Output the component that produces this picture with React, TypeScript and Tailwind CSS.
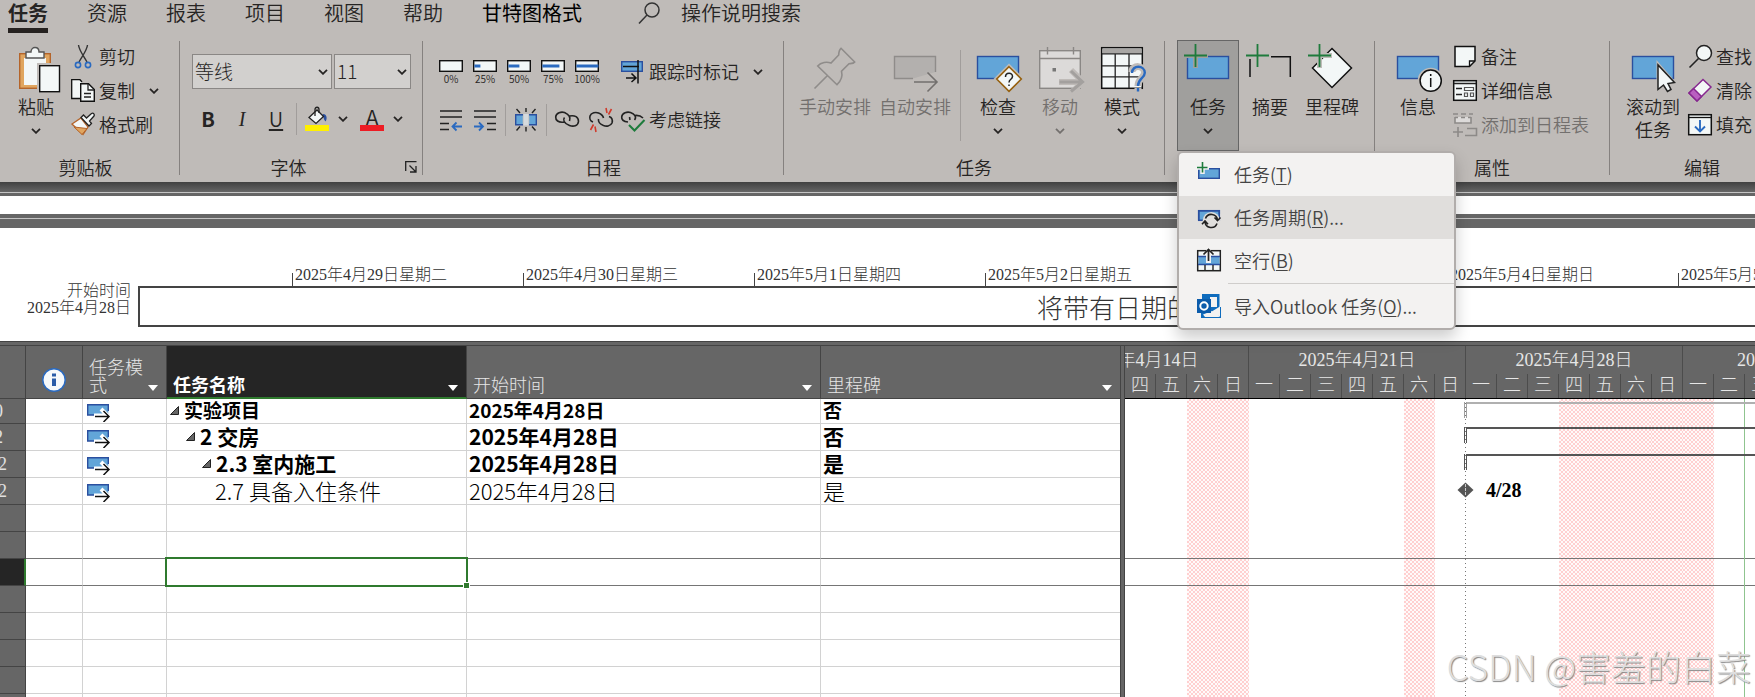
import React from "react";

const BLUE = "#62a5d8";
const EDGE = "#2a4f9f";
const RIBBON = "#bfbbb8";
const PAPER = "#f3f7f7";
const GREEN = "#1e7b3c";

type Kids = { children: React.ReactNode };

/* ---------- icon frames ---------- */

function Big({ children }: Kids) {
  return (
    <svg className="mt-1 mb-px h-[50px] w-12 shrink-0 overflow-visible" viewBox="0 0 48 50" fill="none" aria-hidden="true">
      {children}
    </svg>
  );
}

function Small({ children }: Kids) {
  return (
    <svg className="h-6 w-6 shrink-0 overflow-visible" viewBox="0 0 24 24" fill="none" aria-hidden="true">
      {children}
    </svg>
  );
}

function Chevron({ className = "" }: { className?: string }) {
  return (
    <svg className={`h-1.5 w-2.5 shrink-0 ${className}`} viewBox="0 0 10 6" fill="none" stroke="currentColor" strokeWidth="1.8" aria-hidden="true">
      <path d="M1 0.8 5 4.8 9 0.8" />
    </svg>
  );
}

/* ---------- large icons ---------- */

function Plus({ halo = RIBBON }: { halo?: string }) {
  return (
    <>
      <path d="M11.5 0V24M0 11.5H24" stroke={halo} strokeWidth="5" />
      <path d="M11.5 0V23M0 11.5H23" stroke={GREEN} strokeWidth="1.8" />
    </>
  );
}

const bar = <rect x="3.5" y="12.5" width="41" height="22" fill={BLUE} stroke={EDGE} strokeWidth="1.4" />;

const PasteIcon = () => (
  <Big>
    <rect x="7.7" y="9.7" width="30.6" height="34.6" fill="#e0a55f" stroke="#b4642a" strokeWidth="1.4" />
    <rect x="12" y="14" width="22" height="27" fill={PAPER} />
    <path d="M14 14V8h5c0-6 8-6 8 0h5v6z" fill={PAPER} stroke="#555" strokeWidth="1.4" />
    <rect x="25" y="19" width="23" height="29" fill={RIBBON} />
    <rect x="27.7" y="21.7" width="19.8" height="26" fill={PAPER} stroke="#111" strokeWidth="1.4" />
  </Big>
);

const PinIcon = () => (
  <Big>
    <path
      d="M3.5 44.5 17 31M30 4.3 43.7 18C42.5 19.8 40 19.5 38 19.7L30.5 27.3C31.5 31 31 36 26 40.7L6.7 22C10 18 16 17.5 20 19L27.7 11C27.8 8 28 6 30 4.3Z"
      stroke="#8f8c8a"
      strokeWidth="1.6"
    />
  </Big>
);

const AutoIcon = () => (
  <Big>
    <path d="M22 34.5H3.5V12.5H44.5V28" fill="#b3b0ae" stroke="#8f8c8a" strokeWidth="1.4" />
    <path d="M23 38H46M36.5 28.5 46 38 36.5 47.5" stroke="#73706e" strokeWidth="1.6" />
  </Big>
);

const InspectIcon = () => (
  <Big>
    {bar}
    <path d="M35 19.5 50.5 35 35 50.5 19.5 35Z" fill={RIBBON} />
    <path d="M35 22.7 47.3 35 35 47.3 22.7 35Z" fill={PAPER} stroke="#96600f" strokeWidth="1.6" />
    <path d="M31.5 33C31.5 28 38.5 28 38.5 32.5 38.5 35.5 35 35 35 38.5M35 40.5V42" stroke="#222" strokeWidth="1.5" />
  </Big>
);

const MoveIcon = () => (
  <Big>
    <rect x="3.7" y="6.7" width="40.6" height="37.6" fill="#dcdad9" stroke="#8a8785" strokeWidth="1.4" />
    <path d="M3.5 14.5H44.5M11.5 3V10.5M37.5 3V10.5" stroke="#8a8785" strokeWidth="1.4" />
    <rect x="16.5" y="24" width="3.5" height="3.5" fill="#777" />
    <path d="M23 38H46M35 26 47 38 35 49" stroke={RIBBON} strokeWidth="6" />
    <path d="M23.5 38H46M35 27 46.5 38 35 47.5" stroke="#a3a09e" strokeWidth="3" />
  </Big>
);

const ModeIcon = () => (
  <Big>
    <rect x="3.7" y="3.7" width="40.6" height="40.6" fill={PAPER} stroke="#111" strokeWidth="1.5" />
    <rect x="4.5" y="4.5" width="39" height="5" fill="#a8a6a4" />
    <path d="M4 9.8H44M4 21.8H44M4 32.8H44M17.2 10V44M31 10V44" stroke="#222" strokeWidth="1.3" />
    <path d="M34 28C34 20.5 46.5 21 46.5 28.5 46.5 34 40 34 40 42M40 44V47.5" stroke={RIBBON} strokeWidth="7" />
    <path d="M34 29C34 20.5 46.8 21 46.8 28.7 46.8 34.5 40 34 40 42M40 44V47.5" stroke="#2a6ac0" strokeWidth="2.4" />
  </Big>
);

const TaskIcon = () => (
  <Big>
    {bar}
    <Plus halo="#a09f9d" />
  </Big>
);

const SummaryIcon = () => (
  <Big>
    <path d="M4 15V33M25 12.7H44.3V33" stroke="#111" strokeWidth="1.5" />
    <Plus />
  </Big>
);

const MilestoneIcon = () => (
  <Big>
    <path d="M24 4.5 43.5 24 24 43.5 4.5 24Z" fill={PAPER} stroke="#111" strokeWidth="1.5" />
    <Plus />
  </Big>
);

const InfoTaskIcon = () => (
  <Big>
    {bar}
    <circle cx="36.7" cy="36.7" r="13" fill={RIBBON} />
    <circle cx="36.7" cy="36.7" r="10.6" fill={PAPER} stroke="#111" strokeWidth="1.5" />
    <path d="M36.7 34V43M36.7 30V32" stroke="#111" strokeWidth="1.5" />
  </Big>
);

const ScrollIcon = () => (
  <Big>
    {bar}
    <path d="M27.5 16V50L34 45 38 51 45 47.5 43 42H50Z" fill={RIBBON} />
    <path d="M29 21V45.5L34.5 41 38.5 47.5 42 45.5 39 39.5 45.5 38.5Z" fill={PAPER} stroke="#222" strokeWidth="1.5" />
  </Big>
);

/* ---------- small icons ---------- */

const CutIcon = () => (
  <Small>
    <path d="M7.5 0C8 5 12 10 16 17M16.5 0C16 5 12 10 8 17" stroke="#333" strokeWidth="1.4" />
    <circle cx="7" cy="20" r="2.6" stroke="#2a6ac0" strokeWidth="1.6" />
    <circle cx="17" cy="20" r="2.6" stroke="#2a6ac0" strokeWidth="1.6" />
  </Small>
);

const CopyIcon = () => (
  <Small>
    <path d="M9 19.5H.7V.7H9L11 3" fill={PAPER} stroke="#111" strokeWidth="1.3" />
    <path d="M9.7 4.7H17.5L23.3 10.5V22.3H9.7Z" fill={PAPER} stroke="#111" strokeWidth="1.4" />
    <path d="M17 5V11H23M13 14.5H20M13 18H20" stroke="#222" strokeWidth="1.3" />
  </Small>
);

const BrushIcon = () => (
  <Small>
    <path d="M1 11 10 5 17 14 12 21.5Z" fill={PAPER} stroke="#b4642a" strokeWidth="1.3" />
    <path d="M3 14 16 15.5 11 21.5Z" fill="#e0a55f" stroke="#b4642a" />
    <path d="M10 4.5 12.5 2 15.5 5 20.5 .5C22.5 -.5 24 1.5 23 3L18.5 8 20.5 10.5 18 13Z" fill={PAPER} stroke="#222" strokeWidth="1.3" />
  </Small>
);

const BucketIcon = () => (
  <Small>
    <path d="M18 7C22 7 22.5 12 20.5 14.5 18 12 19.5 10 17 9Z" fill="#2a4f9f" />
    <path d="M4 10.5 12 3 18.5 9.5 11 16.5Z" fill={PAPER} stroke="#222" strokeWidth="1.3" />
    <path d="M10 9V2.5C10 -.5 14 -.5 14 2.5V6" stroke="#222" strokeWidth="1.3" />
    <rect x="0" y="18" width="24" height="6" fill="#fff000" />
  </Small>
);

const OutdentIcon = () => (
  <Small>
    <path d="M1 3H23M1 9H23M1 15.5H10M1 21.5H10" stroke="#222" strokeWidth="1.5" />
    <path d="M23 18.5H14M17.5 14.5 13.5 18.5 17.5 22.5" stroke="#2a6ac0" strokeWidth="1.8" />
  </Small>
);

const IndentIcon = () => (
  <Small>
    <path d="M1 3H23M1 9H23M14 15.5H23M14 21.5H23" stroke="#222" strokeWidth="1.5" />
    <path d="M1 18.5H10M6 14.5 10 18.5 6 22.5" stroke="#2a6ac0" strokeWidth="1.8" />
  </Small>
);

const SplitIcon = () => (
  <Small>
    <rect x="1.7" y="6.7" width="7" height="10" fill={BLUE} />
    <rect x="15.3" y="6.7" width="7" height="10" fill={BLUE} />
    <path d="M9 6.7H1.7V16.7H9M15 6.7H22.3V16.7H15" stroke={EDGE} strokeWidth="1.4" />
    <rect x="9.5" y="6" width="5" height="11.5" fill="#d5dade" />
    <path d="M12 0V4M2.5 1 6 5M21.5 1 18 5M12 19V23.5M2.5 22.5 6 18.5M21.5 22.5 18 18.5" stroke="#222" strokeWidth="1.4" />
  </Small>
);

const LinkIcon = () => (
  <Small>
    <path
      d="M9.5 14C3 15 .5 12 .7 9 1 4.5 6.5 3.5 9.5 4.5 14 6.500 16 9 14.5 13M14.5 8C20 7 23.5 9 23.5 13.5 23 18 18.5 19 14.5 17.5 9 15.5 7.5 12 9.5 9.5"
      stroke="#222"
      strokeWidth="1.6"
    />
  </Small>
);

const UnlinkIcon = () => (
  <Small>
    <path d="M4 14C1 13 .5 10 1 8 2 4.5 7 4 9.5 5 12 6 14 7.5 14.5 10M20 8.5C23 9.5 23.8 12 23 15 21.5 18.5 17 18.5 14.5 17.5 11 16 9 14 9.5 11" stroke="#222" strokeWidth="1.6" />
    <path d="M17 0 18 5M22.5 1 19.5 6.5M4.5 16.5 1.5 22M6 18.5 7 24" stroke="#d03a2b" strokeWidth="1.6" />
  </Small>
);

const LinkCheckIcon = () => (
  <Small>
    <path d="M7 14C2 13.5 .5 11 .7 9 1 4.5 6.5 3.5 9.5 4.5 13.5 6 16 9 13.5 12M13.5 7.5C17 7 20 8 22 10M9 12 8.5 9" stroke="#222" strokeWidth="1.6" />
    <path d="M8 17 13.5 22.5 23.5 12" stroke={GREEN} strokeWidth="2" />
  </Small>
);

const TrackIcon = () => (
  <Small>
    <rect x=".7" y="1.7" width="20.6" height="9.6" fill={BLUE} stroke={EDGE} strokeWidth="1.4" />
    <path d="M2 6.5H18M17 0V23.5M5 18H14M10.5 13.5 15 18 10.5 22" stroke="#111" strokeWidth="1.5" />
  </Small>
);

const NoteIcon = () => (
  <Small>
    <path d="M2 1.5H22V16L16.5 21.5H2Z" fill={PAPER} stroke="#111" strokeWidth="1.5" />
    <path d="M22 16H16.5V21.5" stroke="#111" strokeWidth="1.3" />
  </Small>
);

const DetailIcon = () => (
  <Small>
    <rect x=".7" y="1.7" width="22.6" height="19.6" fill={PAPER} stroke="#111" strokeWidth="1.5" />
    <path d="M1 4.5H23M3 9.5H9M3 15.5H9" stroke="#222" strokeWidth="1.3" />
    <path d="M11.5 8.5H20.5V11.5H11.5ZM11.5 14H14.5V17.5H11.5ZM17.5 14H20.5V17.5H17.5Z" stroke="#555" strokeWidth="1.2" />
  </Small>
);

const AddTimelineIcon = () => (
  <Small>
    <rect x="2" y="4" width="16" height="6" fill="#dcdad9" />
    <path d="M0 1H5M8 1H13M16 1H20M2 4V10H18V4M2 4.5H5M8 4.500H12M15 4.5H18M5 14V24M0 19H10M14 15.5H23.5V22.5H12" stroke="#8d8a88" strokeWidth="1.6" />
  </Small>
);

const FindIcon = () => (
  <Small>
    <circle cx="16" cy="8" r="7.5" fill={PAPER} stroke="#222" strokeWidth="1.5" />
    <path d="M10.5 13.5 1.5 22.5" stroke="#222" strokeWidth="1.6" />
  </Small>
);

const EraserIcon = () => (
  <Small>
    <path d="M1 14 15 .5 23 8 9 22Z" fill={PAPER} stroke="#86278f" strokeWidth="1.5" />
    <path d="M1 14 5.5 9.5 13.5 17.5 9 22Z" fill="#b95fc0" stroke="#86278f" strokeWidth="1.5" />
  </Small>
);

const FillIcon = () => (
  <Small>
    <rect x=".7" y="1.7" width="22.6" height="20" fill={PAPER} stroke="#111" strokeWidth="1.5" />
    <path d="M1 4.5H23" stroke="#111" strokeWidth="1.3" />
    <path d="M12 7V18.5M7 13.5 12 18.5 17 13.5" stroke="#2a6ac0" strokeWidth="1.9" />
  </Small>
);

const MenuTaskIcon = () => (
  <Small>
    <rect x="1.7" y="6.7" width="20.6" height="9.6" fill={BLUE} stroke={EDGE} strokeWidth="1.4" />
    <path d="M5.5 0V12M0 5.5H12" stroke="#f3f2f1" strokeWidth="4.5" />
    <path d="M5.5 0V10.5M0 5.5H10.5" stroke={GREEN} strokeWidth="1.6" />
  </Small>
);

const MenuCycleIcon = () => (
  <Small>
    <rect x="1.7" y="5.7" width="20.6" height="9.6" fill={BLUE} stroke={EDGE} strokeWidth="1.5" />
    <circle cx="14.3" cy="15.5" r="8.6" fill="#e0dedc" />
    <path d="M1.7 15.3V5.7H22.3V9" stroke={EDGE} strokeWidth="1.5" />
    <path d="M8.5 13.5A6.2 6.2 0 0 1 20.5 15M17.5 12.5 20.5 15.7 23.5 12.5" stroke="#222" strokeWidth="1.6" />
    <path d="M20 18.5A6.2 6.2 0 0 1 8 16.5M5 19.3 8 16 11 19.3" stroke="#222" strokeWidth="1.6" />
  </Small>
);

const MenuBlankIcon = () => (
  <Small>
    <rect x=".7" y="2.7" width="22.6" height="20" fill={PAPER} stroke="#222" strokeWidth="1.5" />
    <rect x="1.5" y="8.5" width="21" height="8" fill={BLUE} />
    <path d="M1 8.5H23M1 16.5H23" stroke={EDGE} strokeWidth="1.4" />
    <path d="M8 17V22.5M16 17V22.5" stroke="#222" strokeWidth="1.4" />
    <path d="M11.5 2V15" stroke="#f3f2f1" strokeWidth="5" />
    <path d="M11.5 2V13M6.5 6.5 11.5 1.5 16.5 6.5" stroke="#222" strokeWidth="1.7" />
  </Small>
);

const OutlookIcon = () => (
  <Small>
    <path d="M5 0H22.5V14H5Z" fill="#0f6cbd" />
    <path d="M13 3H20V13H13Z" fill="#f3f2f1" />
    <path d="M4 13H24V24H4Z" fill="#0f6cbd" />
    <path d="M14 18 23 12.5V22.5ZM6 20.5 15 17 23 23H8Z" fill="#f3f2f1" />
    <rect x="0" y="5" width="14" height="14" fill="#0b5cab" />
    <circle cx="7" cy="12" r="3.7" stroke="#fff" strokeWidth="2" />
  </Small>
);

const LaunchIcon = () => (
  <svg className="h-3 w-3" viewBox="0 0 12 12" fill="none" stroke="#222" strokeWidth="1.3" aria-hidden="true">
    <path d="M.7 10V.7H11.5M4.5 4.5 10.5 10.5M11 5V11H5" />
  </svg>
);

/* ---------- ribbon parts ---------- */

function Group({ label, width, children, launcher }: Kids & { label: string; width: string; launcher?: boolean }) {
  return (
    <section aria-label={label} className={`flex shrink-0 flex-col ${width}`}>
      <div className="h-[111px]">{children}</div>
      <div className="flex h-8 items-center text-lg leading-6">
        <span className="flex-1 text-center">{label}</span>
        {launcher && (
          <button type="button" aria-label="字体设置" className="mr-[5px] ml-2">
            <LaunchIcon />
          </button>
        )}
      </div>
    </section>
  );
}

const Rule = () => <div className="mt-px h-[134px] w-px shrink-0 bg-[#85817f]" />;
const Divider = ({ size }: { size: string }) => <div className={`w-px shrink-0 bg-[#a19d9b] ${size}`} />;

type LargeProps = {
  icon: React.ReactNode;
  label: string;
  width?: string;
  disabled?: boolean;
  arrow?: boolean;
  second?: string;
};

function Large({ icon, label, width = "w-[62px]", disabled, arrow, second }: LargeProps) {
  return (
    <button
      type="button"
      disabled={disabled}
      className={`flex shrink-0 flex-col items-center whitespace-nowrap text-lg leading-[23px] ${width} ${disabled ? "text-[#73706e]" : ""}`}
    >
      {icon}
      <span>{label}</span>
      {second && <span>{second}</span>}
      {arrow && <Chevron className="mt-2.5" />}
    </button>
  );
}

function Row({ icon, label, disabled, arrow }: { icon: React.ReactNode; label: string; disabled?: boolean; arrow?: boolean }) {
  return (
    <button type="button" disabled={disabled} className={`flex h-[34px] items-center gap-1 whitespace-nowrap text-lg leading-6 ${disabled ? "text-[#73706e]" : ""}`}>
      {icon}
      <span className="pb-0.5">{label}</span>
      {arrow && <Chevron className="ml-2.5" />}
    </button>
  );
}

function Combo({ label, value, width }: { label: string; value: string; width: string }) {
  return (
    <div className={`relative ${width}`}>
      <select
        aria-label={label}
        defaultValue={value}
        className="h-[35px] w-full appearance-none border border-[#8a8785] bg-[#d2d0ce] pb-0.5 pl-0.5 text-[19px] leading-6 font-light outline-none"
      >
        <option>{value}</option>
      </select>
      <Chevron className="pointer-events-none absolute top-[15px] right-1" />
    </div>
  );
}

const progress = [
  { label: "0%", size: 0 },
  { label: "25%", size: 6 },
  { label: "50%", size: 11 },
  { label: "75%", size: 17 },
  { label: "100%", size: 22 },
];

const menu = [
  { icon: <MenuTaskIcon />, before: "任务(", key: "T", after: ")" },
  { icon: <MenuCycleIcon />, before: "任务周期(", key: "R", after: ")...", active: true },
  { icon: <MenuBlankIcon />, before: "空行(", key: "B", after: ")" },
  { icon: <OutlookIcon />, before: "导入Outlook 任务(", key: "O", after: ")...", split: true },
];

function TaskMenu() {
  return (
    <div
      role="menu"
      className="absolute top-[111px] left-0 z-20 w-[279px] overflow-hidden rounded-md border-2 border-[#b1adab] bg-[#f3f2f1] text-[#444] shadow-[0_8px_16px_rgba(0,0,0,0.2)]"
    >
      {menu.map((m) => (
        <React.Fragment key={m.key}>
          {m.split && <div className="my-px ml-[49px] h-px bg-[#cfcdcb]" />}
          <button
            type="button"
            role="menuitem"
            className={`flex h-[43px] w-full items-center gap-[13px] pb-0.5 pl-[18px] text-lg leading-6 whitespace-nowrap ${m.active ? "bg-[#e0dedc]" : ""}`}
          >
            {m.icon}
            <span>
              {m.before}
              <span className="underline underline-offset-2">{m.key}</span>
              {m.after}
            </span>
          </button>
        </React.Fragment>
      ))}
    </div>
  );
}

function Ribbon() {
  return (
    <header className="h-[182px] shrink-0 bg-[#bfbbb8] font-[350] text-[#262423]">
      <nav className="flex h-10 items-start gap-[39px] pl-2 text-xl leading-[26px] whitespace-nowrap">
        <a href="#task" className="flex flex-col gap-0.5 font-bold">
          任务
          <span className="h-[5px] bg-[#262220]" />
        </a>
        <a href="#resource">资源</a>
        <a href="#report">报表</a>
        <a href="#project">项目</a>
        <a href="#view">视图</a>
        <a href="#help">帮助</a>
        <a href="#format" className="font-normal text-black">甘特图格式</a>
        <button type="button" className="ml-4 flex items-center gap-5">
          <svg className="h-6 w-6" viewBox="0 0 24 24" fill="none" stroke="#333" strokeWidth="1.5" aria-hidden="true">
            <circle cx="15" cy="9" r="7" />
            <path d="M10 14 2 22.5" />
          </svg>
          操作说明搜索
        </button>
      </nav>
      <div className="flex items-start">
        <Group label="剪贴板" width="w-[179px] pr-2">
          <div className="flex pl-1">
            <Large icon={<PasteIcon />} label="粘贴" width="w-16" arrow />
            <div className="ml-[3px]">
              <Row icon={<CutIcon />} label="剪切" />
              <Row icon={<CopyIcon />} label="复制" arrow />
              <Row icon={<BrushIcon />} label="格式刷" />
            </div>
          </div>
        </Group>
        <Rule />
        <Group label="字体" width="w-[242px]" launcher>
          <div className="flex gap-0.5 pt-3.5 pl-3">
            <Combo label="字体" value="等线" width="w-[140px]" />
            <Combo label="字号" value="11" width="w-[77px]" />
          </div>
          <div className="mt-3 flex h-9 items-center pl-[15px] text-xl leading-6">
            <button type="button" className="w-[26px] text-center font-bold">B</button>
            <button type="button" className="ml-2 w-[26px] text-center font-['Liberation_Serif'] italic">I</button>
            <button type="button" className="ml-2 w-[26px] text-center underline underline-offset-2">U</button>
            <span className="ml-[7px]"><Divider size="h-8" /></span>
            <button type="button" aria-label="填充颜色" className="ml-2 flex items-center gap-[9px]">
              <BucketIcon />
              <Chevron />
            </button>
            <button type="button" className="ml-3 flex items-center gap-[9px]">
              <span className="flex w-6 flex-col items-center text-[22px] leading-[18px]">
                A
                <span className="h-1.5 w-full bg-[#ed1c24]" />
              </span>
              <Chevron />
            </button>
          </div>
        </Group>
        <Rule />
        <Group label="日程" width="w-[360px]">
          <div className="mt-3.5 flex h-9 items-center gap-2.5 pl-4">
            {progress.map((p) => (
              <button key={p.label} type="button" className="flex w-6 flex-col items-center gap-0.5 text-[10px] leading-[10px]">
                <svg className="h-3 w-6" viewBox="0 0 24 12" fill="none" aria-hidden="true">
                  <rect x=".7" y=".7" width="22.6" height="10.6" fill={PAPER} stroke="#111" strokeWidth="1.4" />
                  <rect x="1.4" y="4.5" width={p.size} height="3" fill="#2a6ac0" />
                </svg>
                {p.label}
              </button>
            ))}
            <button type="button" className="ml-3 flex items-center gap-1 text-lg leading-6 whitespace-nowrap">
              <TrackIcon />
              <span className="pb-0.5">跟踪时标记</span>
              <Chevron className="ml-2.5" />
            </button>
          </div>
          <div className="mt-3 flex h-9 items-center gap-2 pl-4">
            <button type="button" aria-label="升级任务"><OutdentIcon /></button>
            <button type="button" aria-label="降级任务" className="ml-0.5"><IndentIcon /></button>
            <Divider size="h-8" />
            <button type="button" aria-label="拆分任务"><SplitIcon /></button>
            <Divider size="h-8" />
            <button type="button" aria-label="链接任务"><LinkIcon /></button>
            <button type="button" aria-label="取消链接" className="ml-0.5"><UnlinkIcon /></button>
            <button type="button" className="flex items-center gap-1 text-lg leading-6 whitespace-nowrap">
              <LinkCheckIcon />
              <span className="pb-0.5">考虑链接</span>
            </button>
          </div>
        </Group>
        <Rule />
        <Group label="任务" width="w-[380px]">
          <div className="flex pl-[11px]">
            <Large icon={<PinIcon />} label="手动安排" width="w-20" disabled />
            <Large icon={<AutoIcon />} label="自动安排" width="w-20" disabled />
            <span className="mr-1.5 ml-[5px] pt-2.5"><Divider size="h-[91px]" /></span>
            <Large icon={<InspectIcon />} label="检查" arrow />
            <Large icon={<MoveIcon />} label="移动" arrow disabled />
            <Large icon={<ModeIcon />} label="模式" arrow />
          </div>
        </Group>
        <Rule />
        <Group label="" width="w-[209px]">
          <div className="relative ml-3 flex">
            <button
              type="button"
              aria-haspopup="menu"
              aria-expanded="true"
              className="flex h-[111px] w-[62px] shrink-0 flex-col items-center bg-[#a09f9d] text-lg leading-[23px] outline outline-1 -outline-offset-1 outline-[#666]"
            >
              <TaskIcon />
              任务
              <Chevron className="mt-2.5" />
            </button>
            <Large icon={<SummaryIcon />} label="摘要" />
            <Large icon={<MilestoneIcon />} label="里程碑" />
            <TaskMenu />
          </div>
        </Group>
        <Rule />
        <Group label="属性" width="w-[234px]">
          <div className="flex pl-3">
            <Large icon={<InfoTaskIcon />} label="信息" />
            <div className="ml-1">
              <Row icon={<NoteIcon />} label="备注" />
              <Row icon={<DetailIcon />} label="详细信息" />
              <Row icon={<AddTimelineIcon />} label="添加到日程表" disabled />
            </div>
          </div>
        </Group>
        <Rule />
        <Group label="编辑" width="w-[184px]">
          <div className="flex pl-3">
            <Large icon={<ScrollIcon />} label="滚动到" second="任务" />
            <div className="ml-1">
              <Row icon={<FindIcon />} label="查找" />
              <Row icon={<EraserIcon />} label="清除" />
              <Row icon={<FillIcon />} label="填充" />
            </div>
          </div>
        </Group>
      </div>
    </header>
  );
}

/* ---------- timeline ---------- */

const dates = [
  "2025年4月29日星期二",
  "2025年4月30日星期三",
  "2025年5月1日星期四",
  "2025年5月2日星期五",
  "",
  "2025年5月4日星期日",
  "2025年5月5日星期一",
];

function Timeline() {
  return (
    <section aria-label="日程表" className="shrink-0">
      <div className="h-2.5 bg-linear-to-b from-[#414141] to-[#666]" />
      <div className="h-1 border-t border-[#c4c4c4] bg-[#666]" />
      <div className="h-[18px] bg-white" />
      <div className="h-1 bg-[#666]" />
      <div className="h-2.5 border-t border-[#c4c4c4] bg-[#666]" />
      <div className="flex h-[113px] bg-white pt-9 font-['Liberation_Serif','Noto_Sans_CJK_SC',serif] font-light text-[#333]">
        <div className="w-[138px] shrink-0 pt-[18px] pr-[7px] text-right text-base leading-[17px]">
          <div>开始时间</div>
          <div>2025年4月28日</div>
        </div>
        <div className="min-w-0 flex-1 overflow-hidden">
          <div className="flex h-[22px] items-end pl-[154px]">
            {dates.map((d, i) => (
              <div key={i} className="flex h-[22px] w-[231px] shrink-0 items-end">
                <span className="h-[13px] w-px bg-[#444]" />
                <span className="self-start pl-0.5 text-base leading-[22px] whitespace-nowrap">{d}</span>
              </div>
            ))}
          </div>
          <div className="flex h-[41px] items-center border-y-2 border-l-2 border-[#444] pl-[897px] font-['Noto_Sans_CJK_SC',sans-serif] text-[26px] leading-8 whitespace-nowrap">
            将带有日期的
          </div>
        </div>
      </div>
      <div className="h-[5px] border-y border-[#444] bg-[#666]" />
    </section>
  );
}

/* ---------- task table ---------- */

const Arrow = () => (
  <svg className="mb-0.5 h-1.5 w-2.5 shrink-0" viewBox="0 0 10 6" aria-hidden="true">
    <path d="M0 0H10L5 6Z" fill="#fff" />
  </svg>
);

const Wedge = () => (
  <svg className="h-[9px] w-[9px] shrink-0" viewBox="0 0 9 9" aria-hidden="true">
    <path d="M8.5 .5V8.5H.5Z" fill="#666" stroke="#222" />
  </svg>
);

const ModeCell = () => (
  <svg className="mt-1 ml-1 h-[18px] w-6" viewBox="0 0 24 18" fill="none" aria-label="自动安排">
    <path d="M.7 .7H21.3V11H.7Z" fill={BLUE} />
    <path d="M7 11H.7V.7H21.3V7" stroke={EDGE} strokeWidth="1.4" />
    <path d="M14 5 21 12 14 18M7 11.5H20" stroke="#fff" strokeWidth="4" />
    <path d="M8 12.5H22M16.5 7 22 12.5 16.5 18" stroke="#111" strokeWidth="1.5" />
  </svg>
);

type Task = { no: string; noClass: string; name: string; indent: string; summary: boolean; date: string; ms: string; text: string; height: string };

const tasks: Task[] = [
  { no: "0", noClass: "-ml-1.5", name: "实验项目", indent: "pl-[3px]", summary: true, date: "2025年4月28日", ms: "否", text: "text-[19px] font-bold", height: "h-[25px]" },
  { no: "2", noClass: "-ml-1.5", name: "2 交房", indent: "pl-[19px]", summary: true, date: "2025年4月28日", ms: "否", text: "text-[21px] font-bold", height: "h-[27px]" },
  { no: "2", noClass: "-ml-0.5", name: "2.3 室内施工", indent: "pl-[35px]", summary: true, date: "2025年4月28日", ms: "是", text: "text-[21px] font-bold", height: "h-[27px]" },
  { no: "2", noClass: "-ml-0.5", name: "2.7 具备入住条件", indent: "pl-12", summary: false, date: "2025年4月28日", ms: "是", text: "text-[22px] font-light", height: "h-[27px]" },
];

const blanks = [0, 1, 2, 3, 4, 5, 6, 7];

function TaskTable() {
  const cell = "border-b border-[#d2d2d2] p-0";
  const head = "border-b border-[#444] p-0 align-bottom font-normal";
  return (
    <table className="w-[1120px] shrink-0 table-fixed border-separate border-spacing-0 self-start text-left text-black">
      <colgroup>
        <col className="w-[26px]" />
        <col className="w-[57px]" />
        <col className="w-[84px]" />
        <col className="w-[300px]" />
        <col className="w-[354px]" />
        <col />
      </colgroup>
      <thead className="bg-[#666] text-lg leading-[18px] text-[#e6e6e6]">
        <tr className="h-[53px]">
          <th className={`${head} border-r`} />
          <th className={`${head} border-r`}>
            <svg className="mx-auto mb-1.5 h-6 w-6" viewBox="0 0 24 24" role="img" aria-label="标记">
              <circle cx="12" cy="12" r="11.2" fill="#f6f9fb" stroke="#2a6ac0" strokeWidth="1.5" />
              <path d="M10 5.5H14V8.5H10ZM10 10.5H14V18H10Z" fill="#2a5ca8" />
            </svg>
          </th>
          <th className={`${head} border-r`}>
            <div className="flex items-end justify-between pr-2 pb-[5px] pl-1.5 font-light">
              <span className="w-14">任务模式</span>
              <Arrow />
            </div>
          </th>
          <th className="border-r border-b-2 border-r-[#444] border-b-[#2f7a2e] bg-[#252525] p-0 align-bottom">
            <div className="flex items-end justify-between pr-2 pb-1 pl-1.5 font-bold text-white">
              任务名称
              <Arrow />
            </div>
          </th>
          <th className={`${head} border-r`}>
            <div className="flex items-end justify-between pr-2 pb-[5px] pl-1.5 font-light">
              开始时间
              <Arrow />
            </div>
          </th>
          <th className={head}>
            <div className="flex items-end justify-between pr-2 pb-[5px] pl-1.5 font-light">
              里程碑
              <Arrow />
            </div>
          </th>
        </tr>
      </thead>
      <tbody>
        {tasks.map((t) => (
          <tr key={t.name} className={t.height}>
            <td className="overflow-hidden border-r border-b border-[#444] bg-[#666] p-0 align-middle font-['Liberation_Serif'] text-lg leading-5 text-[#e0e0e0]">
              <div className={t.noClass}>{t.no}</div>
            </td>
            <td className={`${cell} border-r`} />
            <td className={`${cell} border-r`}>
              <ModeCell />
            </td>
            <td className={`${cell} border-r ${t.text}`}>
              <div className={`flex items-center gap-[5px] pb-0.5 leading-[22px] whitespace-nowrap ${t.indent}`}>
                {t.summary && <Wedge />}
                {t.name}
              </div>
            </td>
            <td className={`${cell} border-r leading-[22px] ${t.text}`}>
              <div className="pb-0.5 pl-0.5">{t.date}</div>
            </td>
            <td className={`${cell} leading-[22px] ${t.text}`}>
              <div className="pb-0.5 pl-0.5">{t.ms}</div>
            </td>
          </tr>
        ))}
        {blanks.map((i) => {
          const selected = i === 2;
          const line = i === 1 || i === 2 ? "border-b border-b-[#757575] border-r border-r-[#d2d2d2] p-0" : "border-b border-r border-[#d2d2d2] p-0";
          return (
            <tr key={i} className="h-[27px]">
              <td className={selected ? "border-r-2 border-b border-b-[#444] border-r-[#2f7a2e] bg-[#252525] p-0" : "border-r border-b border-[#444] bg-[#666] p-0"} />
              <td className={line} />
              <td className={line} />
              <td className={`${line} relative`}>
                {selected && (
                  <div className="absolute -inset-0.5 z-10 border-2 border-[#2f7a2e]">
                    <span className="absolute -right-1 -bottom-1 h-[7px] w-[7px] border border-white bg-[#2f7a2e]" />
                  </div>
                )}
              </td>
              <td className={line} />
              <td className={`${line} border-r-0`} />
            </tr>
          );
        })}
      </tbody>
    </table>
  );
}

/* ---------- gantt ---------- */

const weeks = ["2025年4月14日", "2025年4月21日", "2025年4月28日", "2025年5月5日"];
const days = "四五六日一二三四五六日一二三四五六日一二三".split("");
const off = new Set([2, 3, 9, 14, 15, 16, 17, 18]);

function Gantt() {
  return (
    <section aria-label="甘特图" className="flex min-w-0 flex-1 flex-col overflow-hidden bg-white">
      <div className="h-[53px] shrink-0 overflow-hidden border-b border-black bg-[#666] font-['Liberation_Serif','Noto_Sans_CJK_SC',serif] text-lg font-light text-[#e6e6e6]">
        <div className="-ml-[93px] flex h-7">
          {weeks.map((w) => (
            <div key={w} className="w-[217px] shrink-0 border-r border-[#4c4c4c] text-center leading-7 whitespace-nowrap">{w}</div>
          ))}
        </div>
        <div className="flex h-6">
          {days.map((d, i) => (
            <div key={i} className="w-[31px] shrink-0 border-r border-[#4c4c4c] text-center leading-[22px]">{d}</div>
          ))}
        </div>
      </div>
      <div className="relative flex flex-1 overflow-hidden">
        {days.map((d, i) => (
          <div
            key={i}
            className={off.has(i) ? "w-[31px] shrink-0 bg-[repeating-conic-gradient(#ffd0d0_0_25%,#fffafa_0_50%)] bg-[length:4px_4px]" : "w-[31px] shrink-0"}
          />
        ))}
        <div className="absolute inset-x-0 top-[159px] h-7 border-y border-[#757575]" />
        <div className="absolute inset-y-0 left-[619px] w-px bg-[#8fc48f]" />
        <div className="absolute top-[3px] right-0 left-[339px] h-4 border-t-2 border-[#b0b0b0]">
          <div className="-mt-0.5 h-4 w-[3px] border-x border-[#a0a0a0] bg-white" />
        </div>
        <div className="absolute top-7 right-0 left-[339px] h-4 border-t-2 border-[#555]">
          <div className="-mt-0.5 h-4 w-[3px] border-x border-[#555] bg-white" />
        </div>
        <div className="absolute top-[55px] right-0 left-[339px] h-4 border-t-2 border-[#555]">
          <div className="-mt-0.5 h-4 w-[3px] border-x border-[#555] bg-white" />
        </div>
        <div className="absolute inset-y-0 left-[340px] w-px bg-[linear-gradient(#777_1px,transparent_1px)] bg-[length:1px_4px]" />
        <div className="absolute top-[79px] left-[332px] flex items-center gap-3 font-['Liberation_Serif'] text-xl leading-6 font-bold text-black">
          <svg className="h-4 w-[17px]" viewBox="0 0 17 16" aria-hidden="true">
            <path d="M8.5 .5 16.5 8 8.5 15.5 .5 8Z" fill="#555" />
            <path d="M8.5 2V14" stroke="#ccc" strokeDasharray="3 1" />
          </svg>
          4/28
        </div>
      </div>
    </section>
  );
}

export default function App() {
  return (
    <main className="relative flex h-screen w-full flex-col overflow-hidden bg-white font-['Noto_Sans_CJK_SC',sans-serif]">
      <Ribbon />
      <Timeline />
      <div className="flex min-h-0 flex-1 overflow-hidden">
        <TaskTable />
        <div className="w-[5px] shrink-0 border-x border-[#444] bg-[#666]" />
        <Gantt />
      </div>
      <div className="pointer-events-none absolute right-1 bottom-2 text-[35px] leading-[46px] font-light whitespace-nowrap text-[#dedede] [text-shadow:1px_1px_1px_#888]">
        CSDN @害羞的白菜
      </div>
    </main>
  );
}
